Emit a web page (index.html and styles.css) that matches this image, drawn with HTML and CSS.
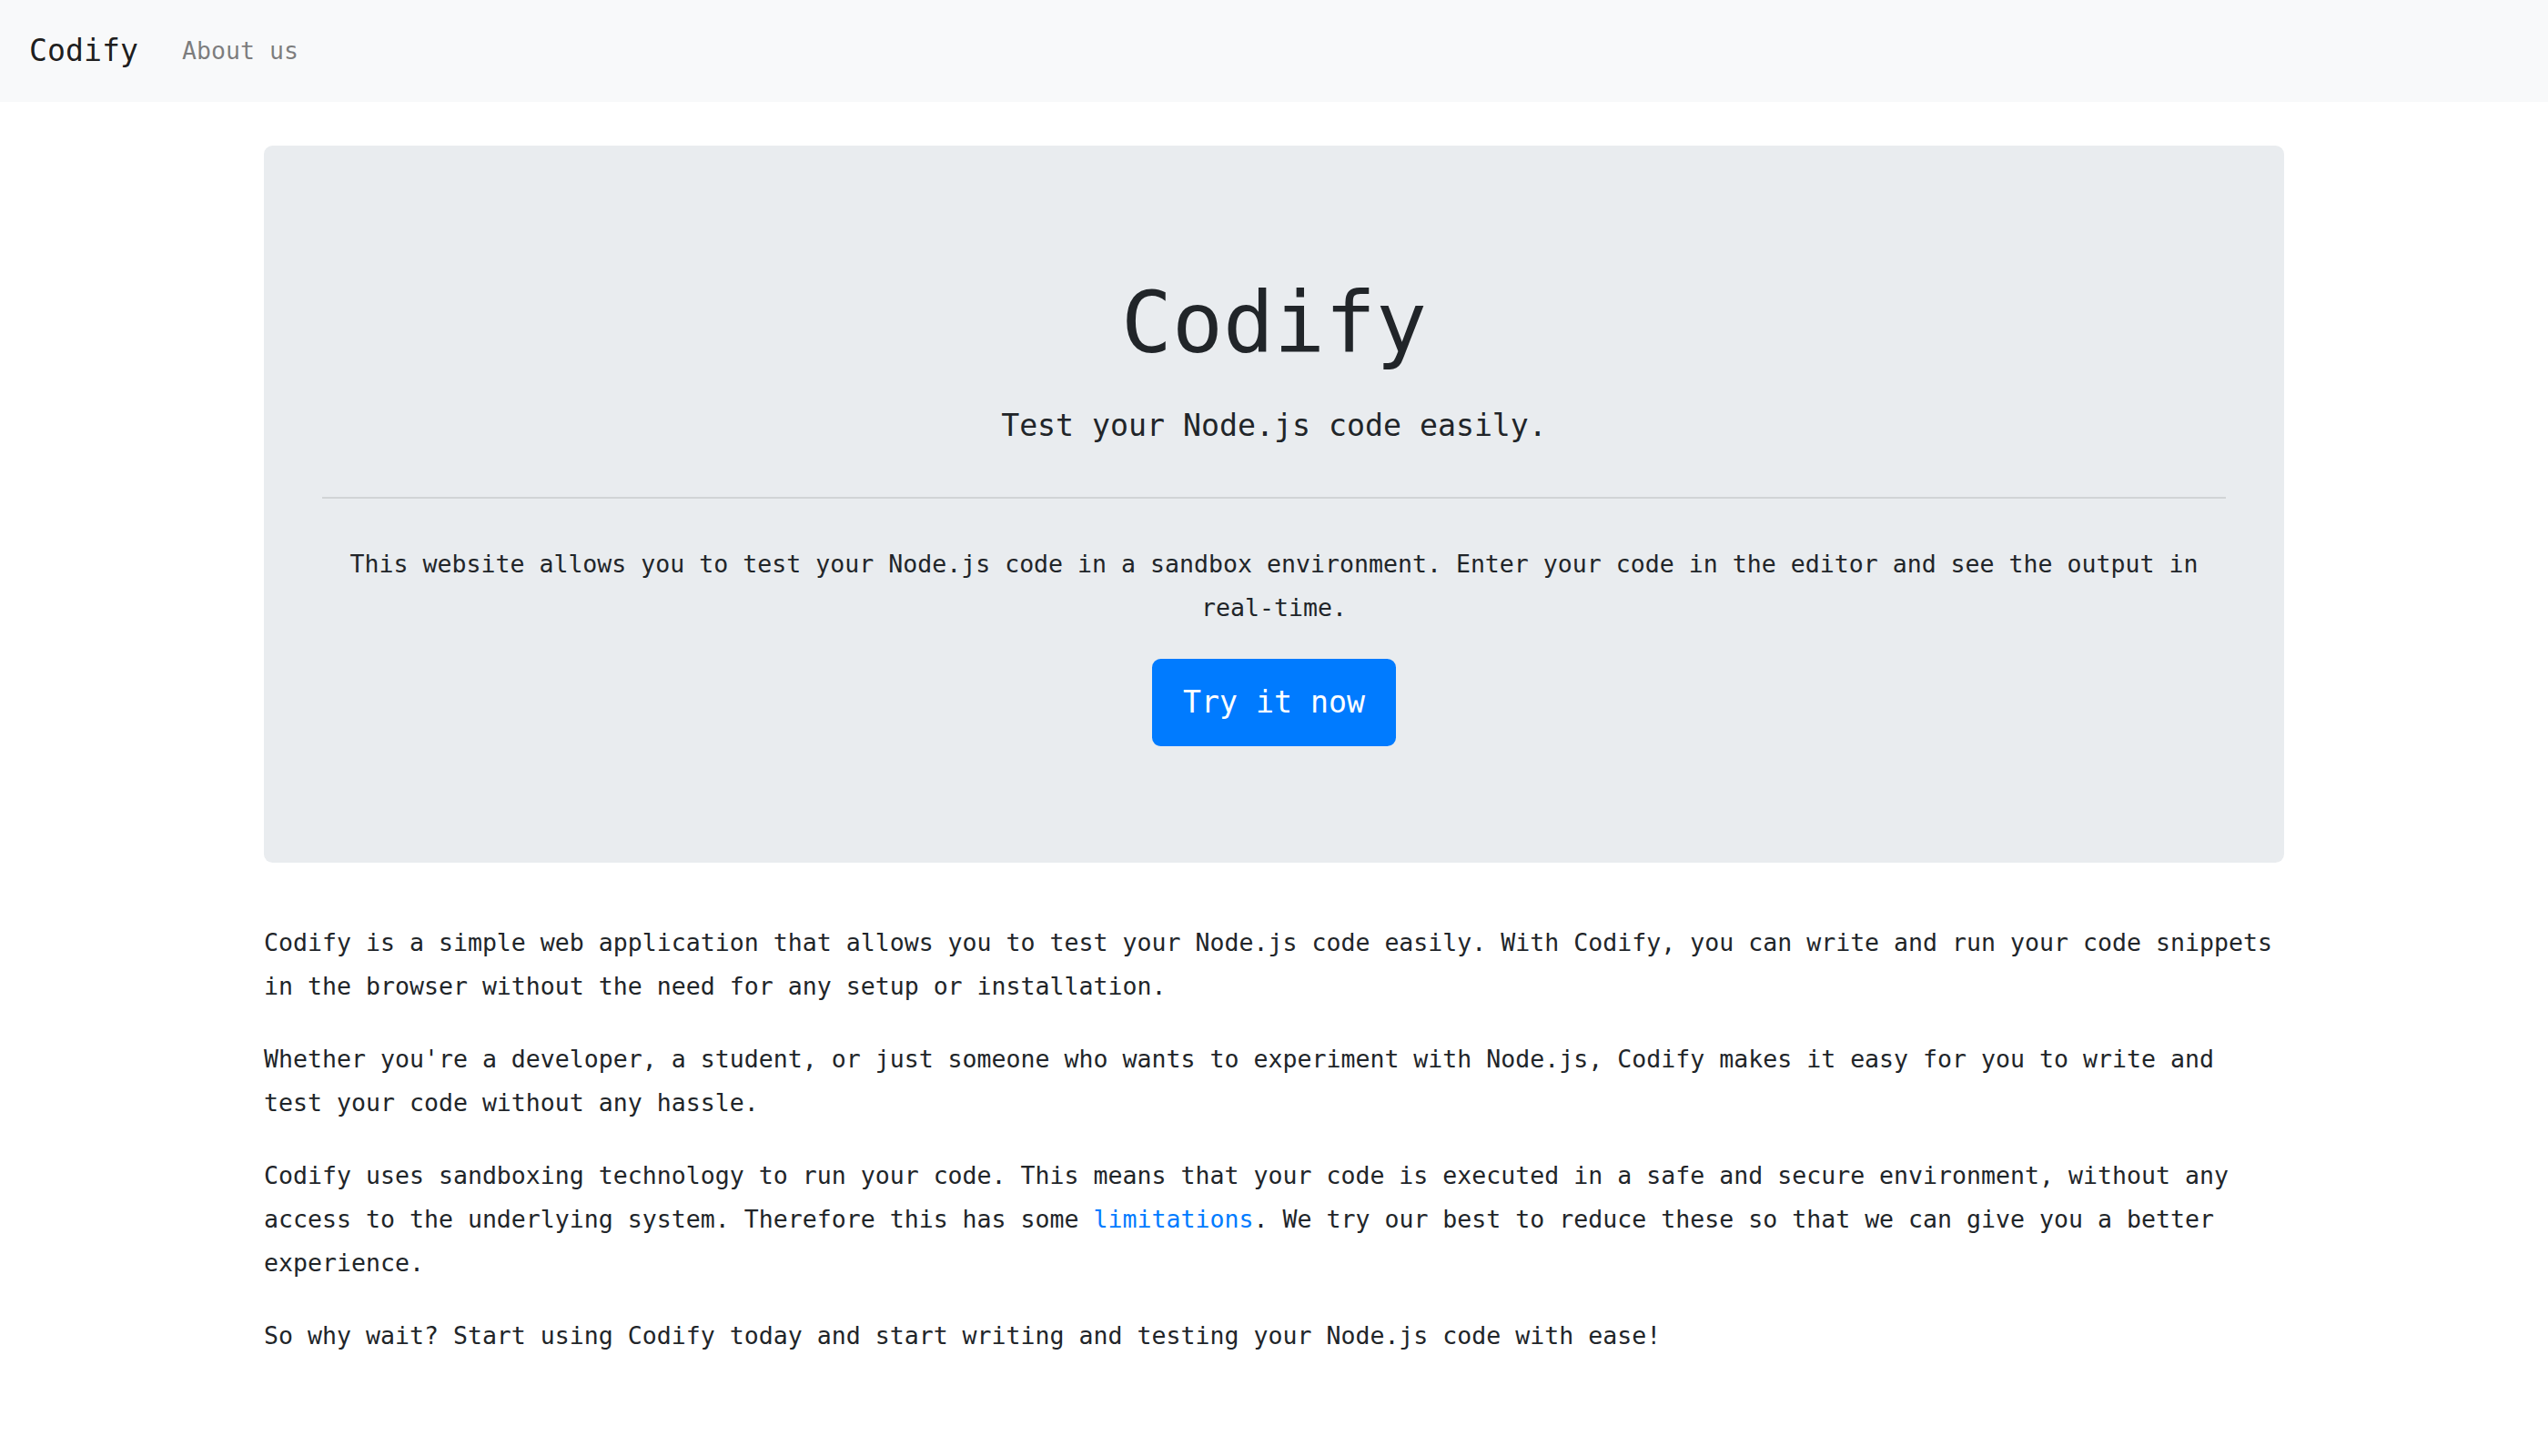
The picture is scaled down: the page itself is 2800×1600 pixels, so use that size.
FILE: index.html
```html
<!DOCTYPE html>
<html lang="en">
<head>
<meta charset="utf-8">
<title>Codify</title>
<link rel="stylesheet" href="styles.css">
</head>
<body>
<nav class="navbar">
  <a class="brand" href="#">Codify</a>
  <a class="nav-link" href="#">About us</a>
</nav>
<main class="container">
  <section class="jumbotron">
    <h1 class="display">Codify</h1>
    <p class="lead">Test your Node.js code easily.</p>
    <hr class="divider">
    <p class="intro">This website allows you to test your Node.js code in a sandbox environment. Enter your code in the editor and see the output in real-time.</p>
    <div class="cta"><a class="btn" href="#">Try it now</a></div>
  </section>
  <p class="text">Codify is a simple web application that allows you to test your Node.js code easily. With Codify, you can write and run your code snippets in the browser without the need for any setup or installation.</p>
  <p class="text">Whether you're a developer, a student, or just someone who wants to experiment with Node.js, Codify makes it easy for you to write and test your code without any hassle.</p>
  <p class="text">Codify uses sandboxing technology to run your code. This means that your code is executed in a safe and secure environment, without any access to the underlying system. Therefore this has some <a class="link" href="#">limitations</a>. We try our best to reduce these so that we can give you a better experience.</p>
  <p class="text">So why wait? Start using Codify today and start writing and testing your Node.js code with ease!</p>
</main>
</body>
</html>
```
FILE: styles.css
```css
:root {
  --k: 0.83049;
}
* { box-sizing: border-box; }
body {
  margin: 0;
  font-family: "DejaVu Sans Mono", "Liberation Mono", monospace;
  font-size: calc(32px * var(--k));
  line-height: 48px;
  color: #212529;
  background: #fff;
}
a { text-decoration: none; }

.navbar {
  display: flex;
  align-items: center;
  padding: 16px 32px;
  background: #f8f9fa;
  height: 112px;
}
.brand {
  font-size: calc(40px * var(--k));
  line-height: 60px;
  padding: 10px 0;
  margin-right: 32px;
  color: rgba(0, 0, 0, 0.9);
}
.nav-link {
  padding: 16px;
  color: rgba(0, 0, 0, 0.5);
}

.container {
  width: 2280px;
  margin: 48px auto 0;
  padding: 0 30px;
}

.jumbotron {
  background: #e9ecef;
  border-radius: 9.6px;
  padding: 128px 64px;
  margin-bottom: 64px;
  text-align: center;
}
.display {
  margin: 0 0 16px;
  font-size: calc(112px * var(--k));
  line-height: 134.4px;
  font-weight: 400;
}
.lead {
  margin: 0 0 32px;
  font-size: calc(40px * var(--k));
  line-height: 60px;
}
.divider {
  margin: 48px 0;
  border: 0;
  border-top: 2px solid rgba(0, 0, 0, 0.1);
}
.intro {
  margin: 0 0 32px;
}
.btn {
  display: inline-block;
  padding: 16px 32px;
  font-size: calc(40px * var(--k));
  line-height: 60px;
  color: #fff;
  background: #007bff;
  border: 2px solid #007bff;
  border-radius: 9.6px;
}

.text {
  margin: 0 0 32px;
}
.link {
  color: #007bff;
}
```
